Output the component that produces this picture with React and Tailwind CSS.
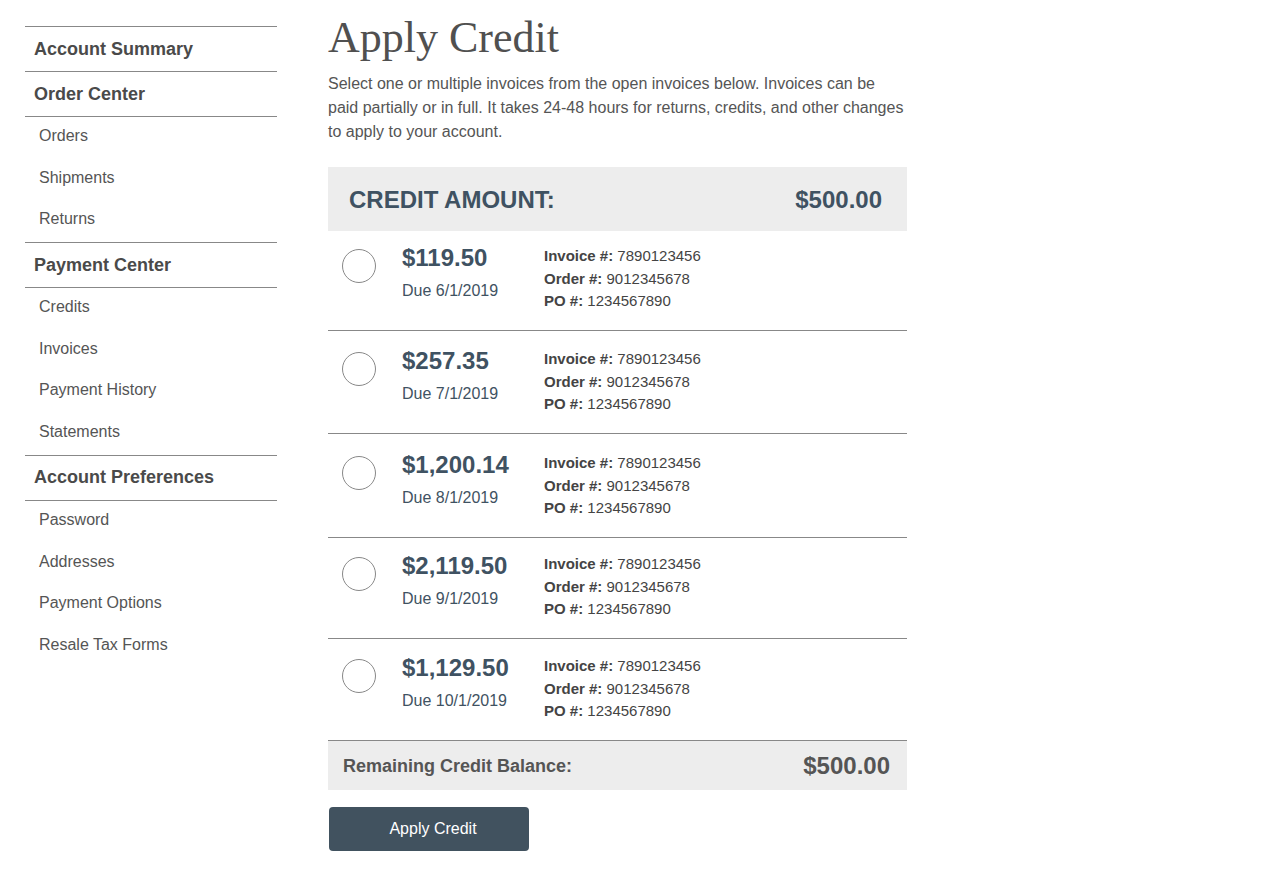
import React from "react";

const nav = [
  { title: "Account Summary", items: [] },
  { title: "Order Center", items: ["Orders", "Shipments", "Returns"] },
  { title: "Payment Center", items: ["Credits", "Invoices", "Payment History", "Statements"] },
  { title: "Account Preferences", items: ["Password", "Addresses", "Payment Options", "Resale Tax Forms"] },
];

const invoices = [
  { amount: "$119.50", due: "Due 6/1/2019", h: "h-[100px] pt-0" },
  { amount: "$257.35", due: "Due 7/1/2019", h: "h-[103px] pt-[3px]" },
  { amount: "$1,200.14", due: "Due 8/1/2019", h: "h-[104px] pt-[4px]" },
  { amount: "$2,119.50", due: "Due 9/1/2019", h: "h-[101px] pt-[1px]" },
  { amount: "$1,129.50", due: "Due 10/1/2019", h: "h-[102px] pt-[2px]" },
];

export default function App() {
  return (
    <div
      className="flex min-h-[879px] w-[1280px] bg-white"
      style={{ fontFamily: '"Liberation Sans", Arial, sans-serif' }}
    >
      <aside className="ml-[25px] mt-[26px] w-[252px] shrink-0">
        {nav.map((sec) => (
          <div key={sec.title}>
            <div className="flex h-[45px] items-center border-t border-[#888] pl-[9px] text-[18px] font-bold text-[#4a4a4a]">
              {sec.title}
            </div>
            {sec.items.length > 0 && (
              <div className="border-t border-[#888]">
                {sec.items.map((it) => (
                  <div key={it} className="h-[41.7px] pl-[14px] pt-[7px] text-[16px] leading-[24px] text-[#555]">
                    {it}
                  </div>
                ))}
              </div>
            )}
          </div>
        ))}
      </aside>

      <main className="ml-[51px] w-[579px] pt-[16px]">
        <h1
          className="text-[44px] leading-[44px] text-[#505050]"
          style={{ fontFamily: '"Liberation Serif", "Times New Roman", serif' }}
        >
          Apply Credit
        </h1>
        <p className="mt-[12px] text-[16px] leading-[24px] text-[#555]">
          Select one or multiple invoices from the open invoices below. Invoices can be paid partially or in full. It
          takes 24-48 hours for returns, credits, and other changes to apply to your account.
        </p>

        <div className="mt-[23px] flex h-[64px] items-center justify-between bg-[#ededed] pl-[21px] pr-[25px] pt-[2px] text-[24px] font-bold text-[#3f5262]">
          <span>CREDIT AMOUNT:</span>
          <span>$500.00</span>
        </div>

        {invoices.map((inv) => (
          <div key={inv.amount} className={`flex border-b border-[#888] ${inv.h}`}>
            <div className="ml-[14px] mt-[18px] h-[34px] w-[34px] shrink-0 rounded-full border border-[#888] bg-white" />
            <div className="ml-[26px] w-[142px] pt-[13px]">
              <div className="text-[24px] font-bold leading-[28px] text-[#3f5262]">{inv.amount}</div>
              <div className="mt-[7px] text-[16px] leading-[24px] text-[#3f5262]">{inv.due}</div>
            </div>
            <div className="pt-[14px] text-[15px] leading-[22.5px] text-[#444]">
              <div>
                <span className="font-bold">Invoice #:</span> 7890123456
              </div>
              <div>
                <span className="font-bold">Order #:</span> 9012345678
              </div>
              <div>
                <span className="font-bold">PO #:</span> 1234567890
              </div>
            </div>
          </div>
        ))}

        <div className="flex h-[49px] items-center justify-between bg-[#ededed] pl-[15px] pr-[17px] pt-px font-bold text-[#555]">
          <span className="text-[18px]">Remaining Credit Balance:</span>
          <span className="text-[24px]">$500.00</span>
        </div>

        <button className="ml-px mt-[17px] flex h-[44px] w-[200px] items-center justify-center rounded-[4px] bg-[#41525f] pl-2 text-[16px] text-white">
          Apply Credit
        </button>
      </main>
    </div>
  );
}
